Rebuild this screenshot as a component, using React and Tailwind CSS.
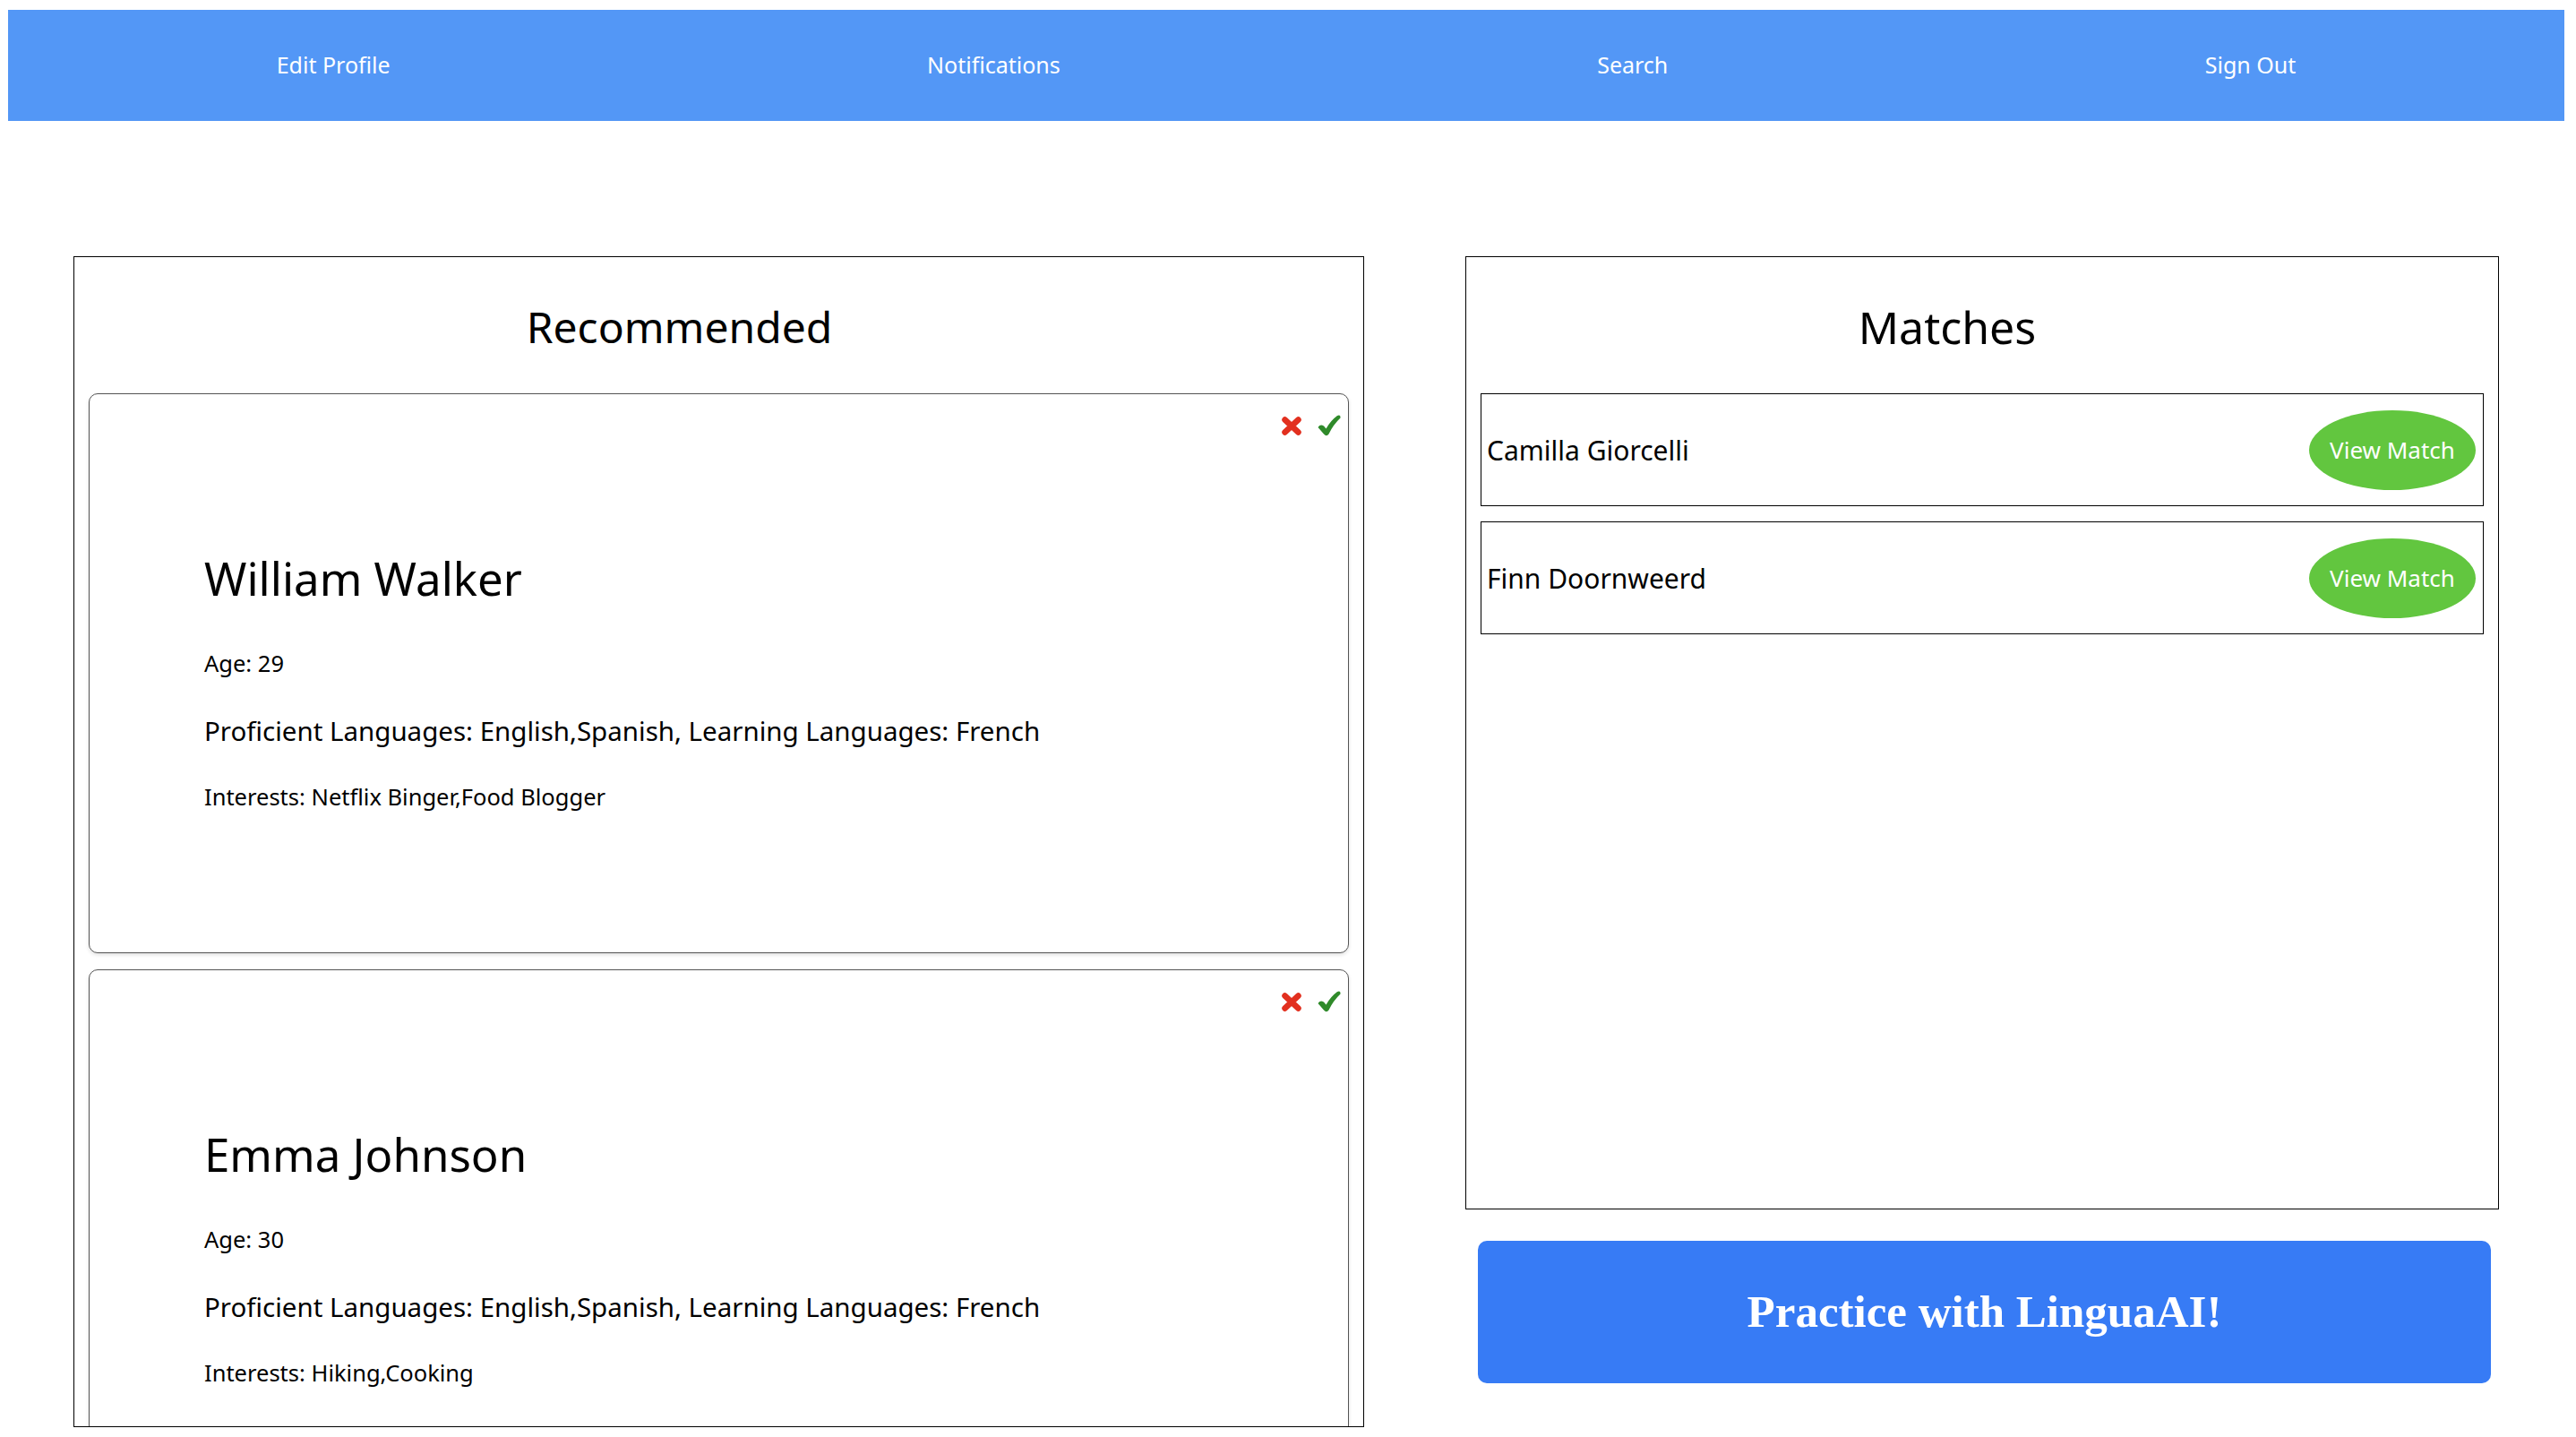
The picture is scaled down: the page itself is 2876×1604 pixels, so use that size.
import React from "react";

const font = { fontFamily: '"Noto Sans", "Open Sans", sans-serif' };

function XIcon() {
  return (
    <svg width="22" height="21" viewBox="0 0 22 21" className="block">
      <path d="M3.5 3.5 L18.5 17.5 M18.5 3.5 L3.5 17.5" stroke="#e2301f" strokeWidth="6.5" strokeLinecap="round" />
    </svg>
  );
}

function CheckIcon() {
  return (
    <svg width="26" height="24" viewBox="0 0 26 24" className="block">
      <path
        d="M0.5 14 Q3 10 7 12.5 L9.5 15.5 Q14.5 6.5 22 1 Q26 -0.5 25.5 3.5 Q17.5 11 12.5 21.5 Q10 25 7 21.5 Z"
        fill="#2f8a2a"
      />
    </svg>
  );
}

function Card({ name, age, interests }) {
  return (
    <div className="relative h-[625px] shrink-0 rounded-[10px] border border-[#555] shadow-[0_2px_4px_rgba(0,0,0,0.12)] bg-white pl-[128px] pt-[180px]">
      <div className="absolute top-[23px] right-[8px] flex items-center gap-[18px]">
        <XIcon />
        <CheckIcon />
      </div>
      <div className="text-[51px] leading-none text-black">{name}</div>
      <div className="mt-[57px] text-[25.5px] leading-none text-black">Age: {age}</div>
      <div className="mt-[47px] text-[29.5px] leading-none text-black">
        Proficient Languages: English,Spanish, Learning Languages: French
      </div>
      <div className="mt-[47px] text-[25.5px] leading-none text-black">Interests: {interests}</div>
    </div>
  );
}

function MatchRow({ name }) {
  return (
    <div className="flex h-[126px] items-center justify-between border border-black pl-[6px] pr-[8px]">
      <span className="text-[30px] text-black">{name}</span>
      <button className="flex h-[89px] w-[186px] items-center justify-center rounded-[50%] bg-[#62c63f] text-[26px] text-white">
        View Match
      </button>
    </div>
  );
}

export default function App() {
  return (
    <div className="min-h-[1604px] w-[2876px] bg-white pt-[11px]" style={font}>
      <nav className="ml-[9px] mr-[13px] flex h-[124px] items-center justify-around bg-[#5397f6] text-[25px] text-white">
        <span>Edit Profile</span>
        <span>Notifications</span>
        <span>Search</span>
        <span>Sign Out</span>
      </nav>

      <main className="mt-[151px] flex items-start gap-[113px] pl-[82px]">
        <section className="flex h-[1307px] w-[1441px] flex-col overflow-hidden border border-black">
          <div className="flex h-[152px] shrink-0 items-center justify-center pr-[88px] pt-[3px] text-[48px] leading-none text-black">
            Recommended
          </div>
          <div className="flex flex-col gap-[18px] px-[16px]">
            <Card name="William Walker" age="29" interests="Netflix Binger,Food Blogger" />
            <Card name="Emma Johnson" age="30" interests="Hiking,Cooking" />
          </div>
        </section>

        <div className="flex w-[1154px] flex-col">
          <section className="h-[1064px] border border-black">
            <div className="flex h-[152px] items-center justify-center pr-[78px] pt-[3px] text-[50px] leading-none text-black">
              Matches
            </div>
            <div className="flex flex-col gap-[17px] px-[16px]">
              <MatchRow name="Camilla Giorcelli" />
              <MatchRow name="Finn Doornweerd" />
            </div>
          </section>
          <button
            className="ml-[14px] mt-[35px] flex h-[159px] w-[1131px] items-center justify-center rounded-[10px] bg-[#377bf5] text-[51px] font-bold text-white"
            style={{ fontFamily: '"Liberation Serif", "Times New Roman", serif' }}
          >
            Practice with LinguaAI!
          </button>
        </div>
      </main>
    </div>
  );
}
